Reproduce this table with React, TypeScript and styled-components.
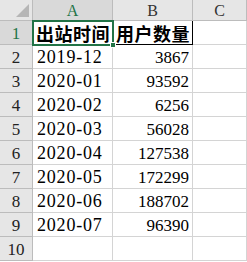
import React from 'react';
import styled, { createGlobalStyle } from 'styled-components';

const GlobalStyle = createGlobalStyle`
  html, body {
    margin: 0;
    padding: 0;
    background: #ffffff;
  }
`;

const rows: [string, number][] = [
  ['2019-12', 3867],
  ['2020-01', 93592],
  ['2020-02', 6256],
  ['2020-03', 56028],
  ['2020-04', 127538],
  ['2020-05', 172299],
  ['2020-06', 188702],
  ['2020-07', 96390],
];

const Sheet = styled.div`
  position: relative;
  width: 247px;
  display: flex;
  flex-direction: column;
  font-family: 'Liberation Serif', 'Times New Roman', serif;
`;

const Row = styled.div<{ $head?: boolean }>`
  display: grid;
  grid-template-columns: 33px 80px 80px 54px;
  height: ${(p) => (p.$head ? 21 : 24)}px;
  flex: none;
`;

const Corner = styled.div`
  position: relative;
  background: #e6e6e6;
  border-right: 1px solid #bcbcbc;
  border-bottom: 1px solid #bcbcbc;
  box-sizing: border-box;

  &::after {
    content: '';
    position: absolute;
    right: 3px;
    bottom: 3px;
    width: 0;
    height: 0;
    border-left: 13px solid transparent;
    border-bottom: 13px solid #b6b6b6;
  }
`;

const ColHead = styled.div<{ $active?: boolean }>`
  display: flex;
  align-items: center;
  justify-content: center;
  box-sizing: border-box;
  background: ${(p) => (p.$active ? '#d9d9d9' : '#e6e6e6')};
  border-right: 1px solid #bcbcbc;
  border-bottom: 1px solid ${(p) => (p.$active ? '#217346' : '#bcbcbc')};
  color: ${(p) => (p.$active ? '#217346' : '#333333')};
  font-size: 16px;
  padding-top: 1px;
`;

const RowHead = styled.div<{ $active?: boolean }>`
  display: flex;
  align-items: center;
  justify-content: center;
  box-sizing: border-box;
  background: ${(p) => (p.$active ? '#d9d9d9' : '#e6e6e6')};
  border-right: 1px solid ${(p) => (p.$active ? '#217346' : '#bcbcbc')};
  border-bottom: 1px solid #bcbcbc;
  color: ${(p) => (p.$active ? '#217346' : '#222222')};
  font-size: 17px;
  padding-top: 2px;
`;

const Cell = styled.div<{ $align?: 'left' | 'right'; $boxed?: boolean }>`
  display: flex;
  align-items: center;
  justify-content: ${(p) => (p.$align === 'right' ? 'flex-end' : 'flex-start')};
  box-sizing: border-box;
  padding: 2px 3px 0 4px;
  border-right: 1px solid ${(p) => (p.$boxed ? '#000000' : '#d4d4d4')};
  border-bottom: 1px solid ${(p) => (p.$boxed ? '#000000' : '#d4d4d4')};
  color: #000000;
  font-size: 18px;
  white-space: nowrap;
  overflow: hidden;
`;

const DateText = styled.span`
  letter-spacing: 0.8px;
`;

const Title = styled(Cell)`
  font-family: 'Noto Sans CJK SC', sans-serif;
  font-weight: 700;
  font-size: 18px;
  letter-spacing: 0.5px;
  padding: 0 0 0 3px;
`;

const NumText = styled.span`
  font-size: 17px;
`;

const Selection = styled.div`
  position: absolute;
  left: 32px;
  top: 20px;
  width: 82px;
  height: 26px;
  box-sizing: border-box;
  border: 2px solid #217346;
  pointer-events: none;

  &::after {
    content: '';
    position: absolute;
    right: -4px;
    bottom: -4px;
    width: 6px;
    height: 6px;
    background: #217346;
    border: 1px solid #ffffff;
    box-sizing: border-box;
  }
`;

export default function App() {
  return (
    <>
      <GlobalStyle />
      <Sheet>
        <Row $head>
          <Corner />
          <ColHead $active>A</ColHead>
          <ColHead>B</ColHead>
          <ColHead>C</ColHead>
        </Row>

        <Row>
          <RowHead $active>1</RowHead>
          <Title $boxed>出站时间</Title>
          <Title $boxed>用户数量</Title>
          <Cell />
        </Row>

        {rows.map(([date, users], i) => (
          <Row key={date}>
            <RowHead>{i + 2}</RowHead>
            <Cell>
              <DateText>{date}</DateText>
            </Cell>
            <Cell $align="right">
              <NumText>{users}</NumText>
            </Cell>
            <Cell />
          </Row>
        ))}

        <Row>
          <RowHead>10</RowHead>
          <Cell />
          <Cell />
          <Cell />
        </Row>
        <Selection />
      </Sheet>
    </>
  );
}
